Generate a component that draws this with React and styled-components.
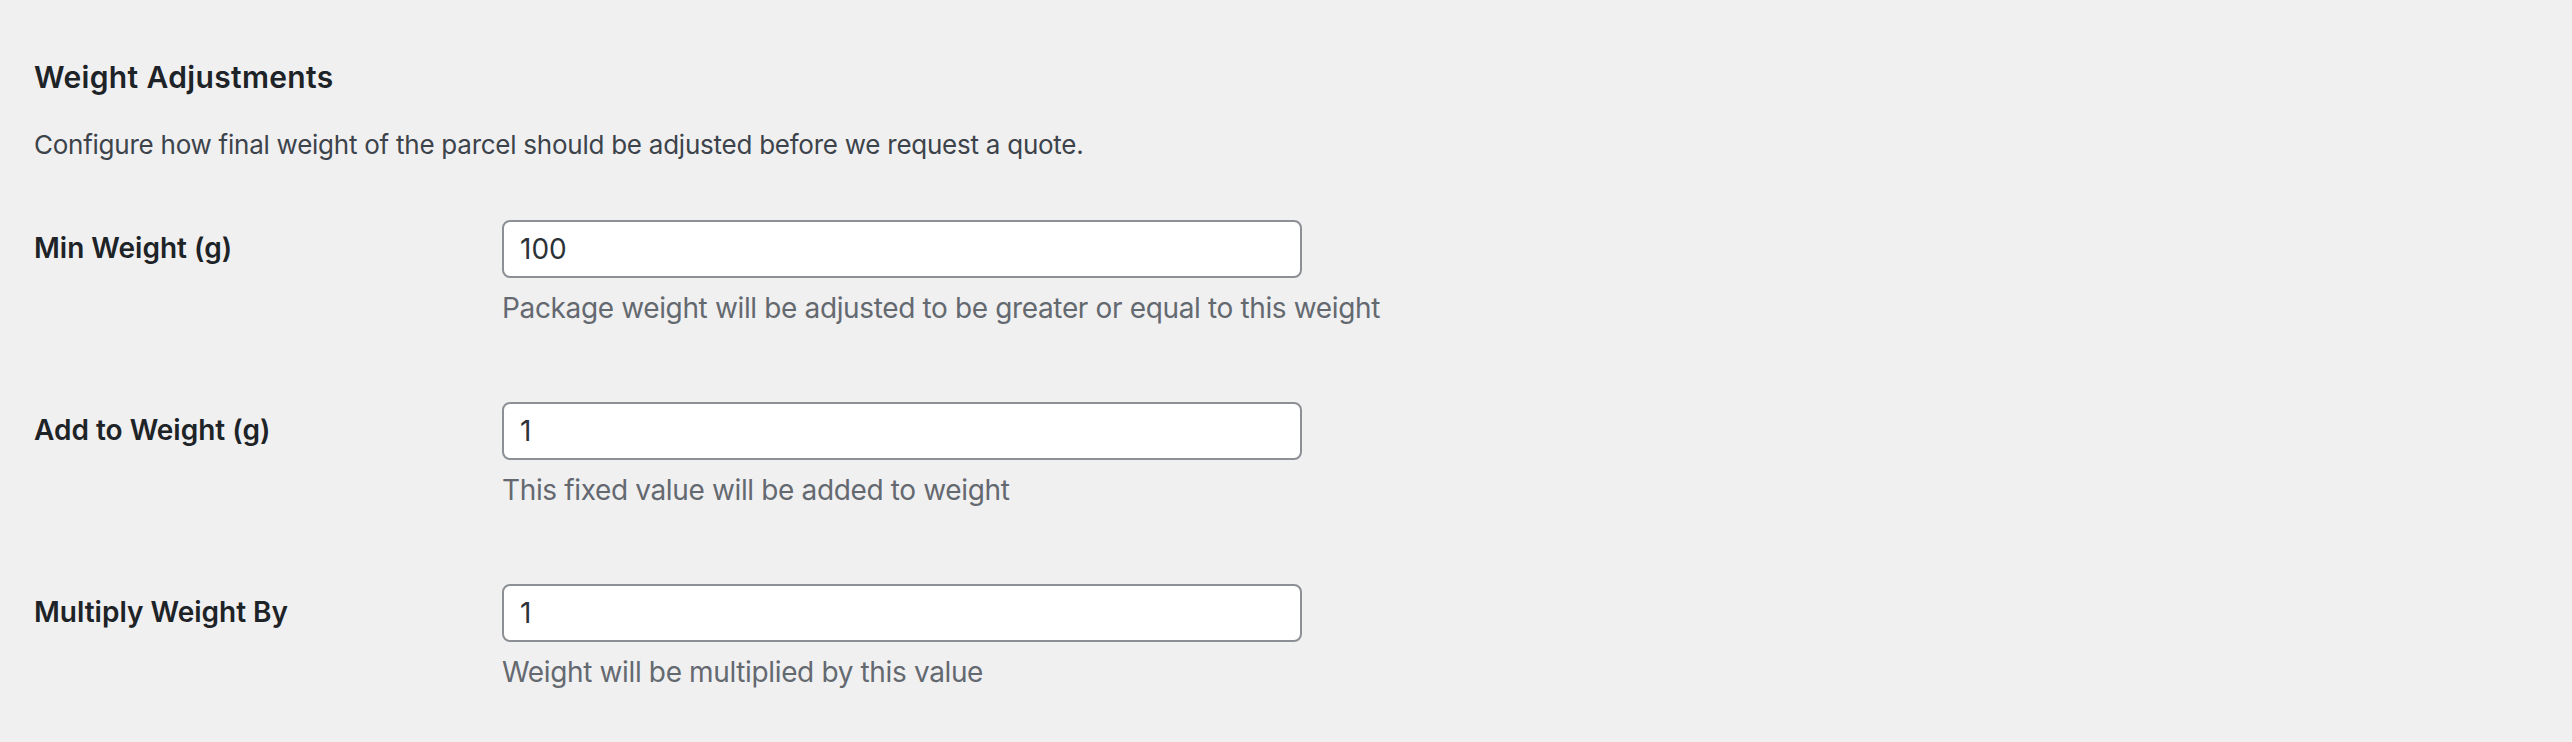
import styled, { createGlobalStyle } from "styled-components";

const GlobalStyle = createGlobalStyle`
  html, body {
    margin: 0;
    padding: 0;
    background: #f0f0f1;
  }
  body {
    font-family: Inter, "Noto Sans", "Liberation Sans", sans-serif;
    color: #3c434a;
  }
`;

const fields = [
  { label: "Min Weight (g)", value: "100", help: "Package weight will be adjusted to be greater or equal to this weight" },
  { label: "Add to Weight (g)", value: "1", help: "This fixed value will be added to weight" },
  { label: "Multiply Weight By", value: "1", help: "Weight will be multiplied by this value" },
];

function App() {
  return (
    <>
      <GlobalStyle />
      <Section>
        <Title>Weight Adjustments</Title>
        <Intro>Configure how final weight of the parcel should be adjusted before we request a quote.</Intro>
        <FormTable>
          {fields.map((f) => (
            <Row key={f.label}>
              <Label>{f.label}</Label>
              <Field>
                <TextInput type="text" defaultValue={f.value} />
                <Help>{f.help}</Help>
              </Field>
            </Row>
          ))}
        </FormTable>
      </Section>
    </>
  );
}
export default App;

const Section = styled.div`
  padding: 0 0 0 34px;
`;

const Title = styled.h2`
  margin: 58px 0 0;
  font-size: 30px;
  line-height: 39px;
  font-weight: 600;
  letter-spacing: 0.35px;
  color: #1d2327;
`;

const Intro = styled.p`
  margin: 28px 0 0;
  font-size: 26px;
  line-height: 39px;
  letter-spacing: -0.25px;
  color: #3c434a;
`;

const FormTable = styled.div`
  margin-top: 20px;
  display: flex;
  flex-direction: column;
`;

const Row = styled.div`
  display: grid;
  grid-template-columns: 468px 800px;
  padding: 36px 0 37px;
`;

const Label = styled.div`
  padding-top: 10px;
  font-size: 28px;
  line-height: 36.4px;
  font-weight: 600;
  color: #1d2327;
`;

const Field = styled.div`
  display: flex;
  flex-direction: column;
`;

const TextInput = styled.input`
  box-sizing: border-box;
  width: 800px;
  height: 58px;
  margin: 0;
  padding: 0 16px;
  border: 2px solid #8c8f94;
  border-radius: 8px;
  background: #fff;
  font-family: inherit;
  font-size: 28px;
  color: #2c3338;
  outline: none;
`;

const Help = styled.p`
  margin: 9px 0 0;
  font-size: 28px;
  line-height: 42px;
  letter-spacing: -0.36px;
  color: #646970;
  white-space: nowrap;
`;
